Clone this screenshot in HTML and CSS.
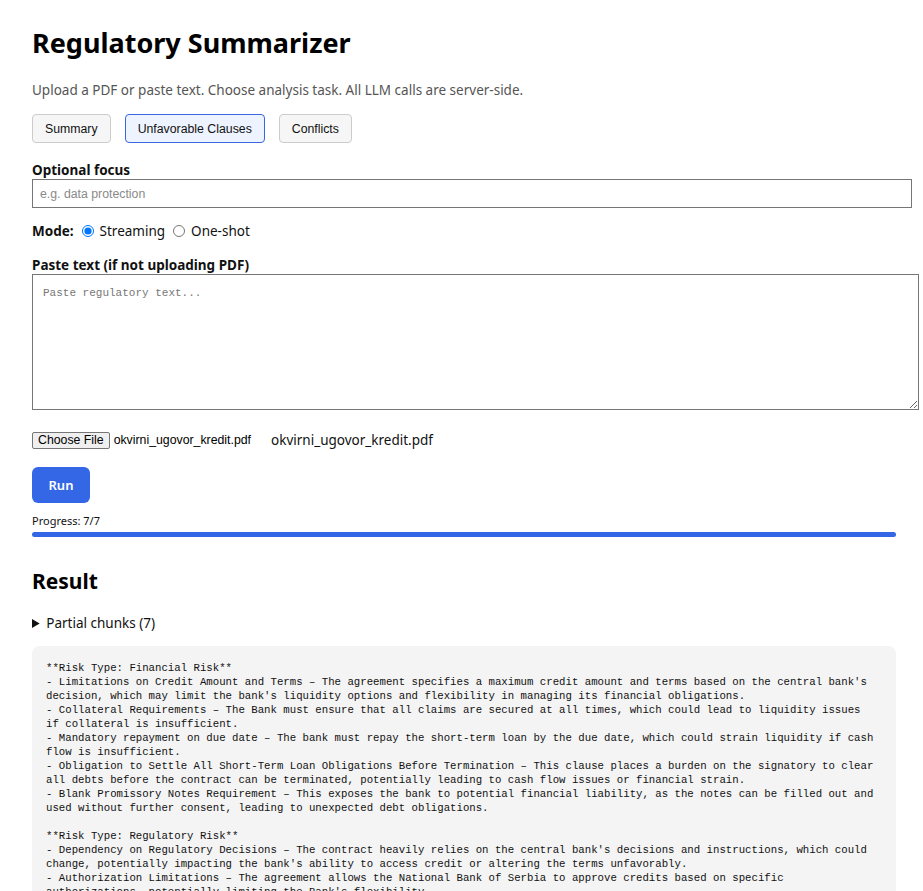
FILE: index.html
```html
<!DOCTYPE html>
<html lang="en">
<head>
<meta charset="utf-8">
<title>Regulatory Summarizer</title>
<link rel="stylesheet" href="styles.css">
</head>
<body>
<main class="app">
  <h1 class="title">Regulatory Summarizer</h1>
  <p class="subtitle">Upload a PDF or paste text. Choose analysis task. All LLM calls are server-side.</p>

  <div class="tasks">
    <button class="task">Summary</button>
    <button class="task active">Unfavorable Clauses</button>
    <button class="task">Conflicts</button>
  </div>

  <label class="label" for="focus">Optional focus</label>
  <input id="focus" class="focus" type="text" placeholder="e.g. data protection">

  <div class="mode">
    <span class="mode-label">Mode:</span>
    <label class="radio"><input type="radio" name="mode" checked> Streaming</label>
    <label class="radio"><input type="radio" name="mode"> One-shot</label>
  </div>

  <label class="label paste-label" for="paste">Paste text (if not uploading PDF)</label>
  <textarea id="paste" class="paste" placeholder="Paste regulatory text..."></textarea>

  <div class="file-row">
    <span class="file-btn">Choose File</span>
    <span class="file-native-name">okvirni_ugovor_kredit.pdf</span>
    <span class="file-name">okvirni_ugovor_kredit.pdf</span>
  </div>

  <button class="run">Run</button>

  <div class="progress-label">Progress: 7/7</div>
  <div class="progress"><div class="progress-fill" style="width:100%"></div></div>

  <h2 class="result-title">Result</h2>

  <details class="chunks">
    <summary>Partial chunks (7)</summary>
  </details>

  <pre class="output">**Risk Type: Financial Risk**
- Limitations on Credit Amount and Terms – The agreement specifies a maximum credit amount and terms based on the central bank's
decision, which may limit the bank's liquidity options and flexibility in managing its financial obligations.
- Collateral Requirements – The Bank must ensure that all claims are secured at all times, which could lead to liquidity issues
if collateral is insufficient.
- Mandatory repayment on due date – The bank must repay the short-term loan by the due date, which could strain liquidity if cash
flow is insufficient.
- Obligation to Settle All Short-Term Loan Obligations Before Termination – This clause places a burden on the signatory to clear
all debts before the contract can be terminated, potentially leading to cash flow issues or financial strain.
- Blank Promissory Notes Requirement – This exposes the bank to potential financial liability, as the notes can be filled out and
used without further consent, leading to unexpected debt obligations.

**Risk Type: Regulatory Risk**
- Dependency on Regulatory Decisions – The contract heavily relies on the central bank's decisions and instructions, which could
change, potentially impacting the bank's ability to access credit or altering the terms unfavorably.
- Authorization Limitations – The agreement allows the National Bank of Serbia to approve credits based on specific
authorizations, potentially limiting the Bank's flexibility.</pre>
</main>
</body>
</html>
```

FILE: styles.css
```css
* { box-sizing: content-box; }

html, body {
  margin: 0;
  padding: 0;
  background: #ffffff;
}

body {
  font-family: "Noto Sans", "Open Sans", sans-serif;
  color: #111111;
}

.app {
  width: 864px;
  padding: 25px 0 40px 32px;
  display: flex;
  flex-direction: column;
  align-items: flex-start;
}

.title {
  margin: 0;
  font-size: 27px;
  line-height: 36px;
  font-weight: 700;
  color: #000;
}

.subtitle {
  margin: 19px 0 0;
  font-size: 13.5px;
  line-height: 20px;
  color: #555555;
}

.tasks {
  margin-top: 14px;
  display: flex;
  gap: 14px;
}

.task {
  margin: 0;
  font-family: "Liberation Sans", Arial, sans-serif;
  font-size: 12.3px;
  height: 29px;
  padding: 0 12px;
  background: #f6f6f6;
  border: 1px solid #cccccc;
  border-radius: 4px;
  color: #111;
  box-sizing: border-box;
}

.task.active {
  background: #eef4ff;
  border-color: #3a66e0;
}

.label {
  margin-top: 18px;
  font-size: 13.5px;
  line-height: 18px;
  font-weight: 700;
  color: #111;
}

.focus {
  width: 864px;
  height: 15px;
  margin: 0;
  padding: 7px 7px 5px;
  border: 1px solid #767676;
  border-radius: 0;
  font-family: "Liberation Sans", Arial, sans-serif;
  font-size: 12.3px;
  line-height: 15px;
  color: #111;
}

.focus::placeholder { color: #8a8a8a; }

.mode {
  margin-top: 13px;
  display: flex;
  align-items: center;
  font-size: 13.5px;
  line-height: 20px;
}

.mode-label {
  font-weight: 700;
  margin-right: 4px;
}

.radio {
  display: inline-flex;
  align-items: center;
  margin-right: 4px;
}

.radio input {
  margin: 0 6px 0 4px;
  width: 12px;
  height: 12px;
}

.paste-label {
  margin-top: 15px;
}

.paste {
  width: 865px;
  height: 114px;
  margin: 0;
  padding: 10px;
  border: 1px solid #767676;
  border-radius: 0;
  font-family: "Liberation Mono", "DejaVu Sans Mono", monospace;
  font-size: 11px;
  line-height: 16px;
  color: #111;
}

.paste::placeholder { color: #777; }

.file-row {
  margin-top: 20px;
  display: flex;
  align-items: center;
  height: 20px;
}

.file-btn {
  font-family: "Liberation Sans", Arial, sans-serif;
  font-size: 12.3px;
  line-height: 15px;
  padding: 0 5px;
  background: #efefef;
  border: 1px solid #767676;
  border-radius: 2px;
  color: #000;
}

.file-native-name {
  font-family: "Liberation Sans", Arial, sans-serif;
  font-size: 12.3px;
  margin-left: 4px;
  color: #000;
}

.file-name {
  margin-left: 20px;
  font-size: 13.5px;
  color: #111;
}

.run {
  margin-top: 17px;
  width: 58px;
  height: 36px;
  padding: 0;
  border: none;
  border-radius: 6px;
  background: #3467e6;
  color: #ffffff;
  font-family: "Noto Sans", sans-serif;
  font-size: 13px;
  font-weight: 600;
}

.progress-label {
  margin-top: 11px;
  font-size: 11px;
  line-height: 14px;
  color: #111;
}

.progress {
  margin-top: 4px;
  width: 864px;
  height: 5px;
  border-radius: 3px;
  background: #e5e5e5;
  overflow: hidden;
}

.progress-fill {
  height: 100%;
  background: #3467e6;
}

.result-title {
  margin: 30px 0 0;
  font-size: 21px;
  line-height: 28px;
  font-weight: 700;
  color: #000;
}

.chunks {
  margin-top: 18px;
  font-size: 13.5px;
  line-height: 20px;
}

.chunks summary {
  cursor: pointer;
}

.output {
  margin: 13px 0 0;
  width: 836px;
  padding: 15px 14px 14px;
  background: #f4f4f4;
  border-radius: 8px;
  font-family: "Liberation Mono", "DejaVu Sans Mono", monospace;
  font-size: 10.7px;
  line-height: 14px;
  color: #111;
  white-space: pre;
  overflow: hidden;
}
```
